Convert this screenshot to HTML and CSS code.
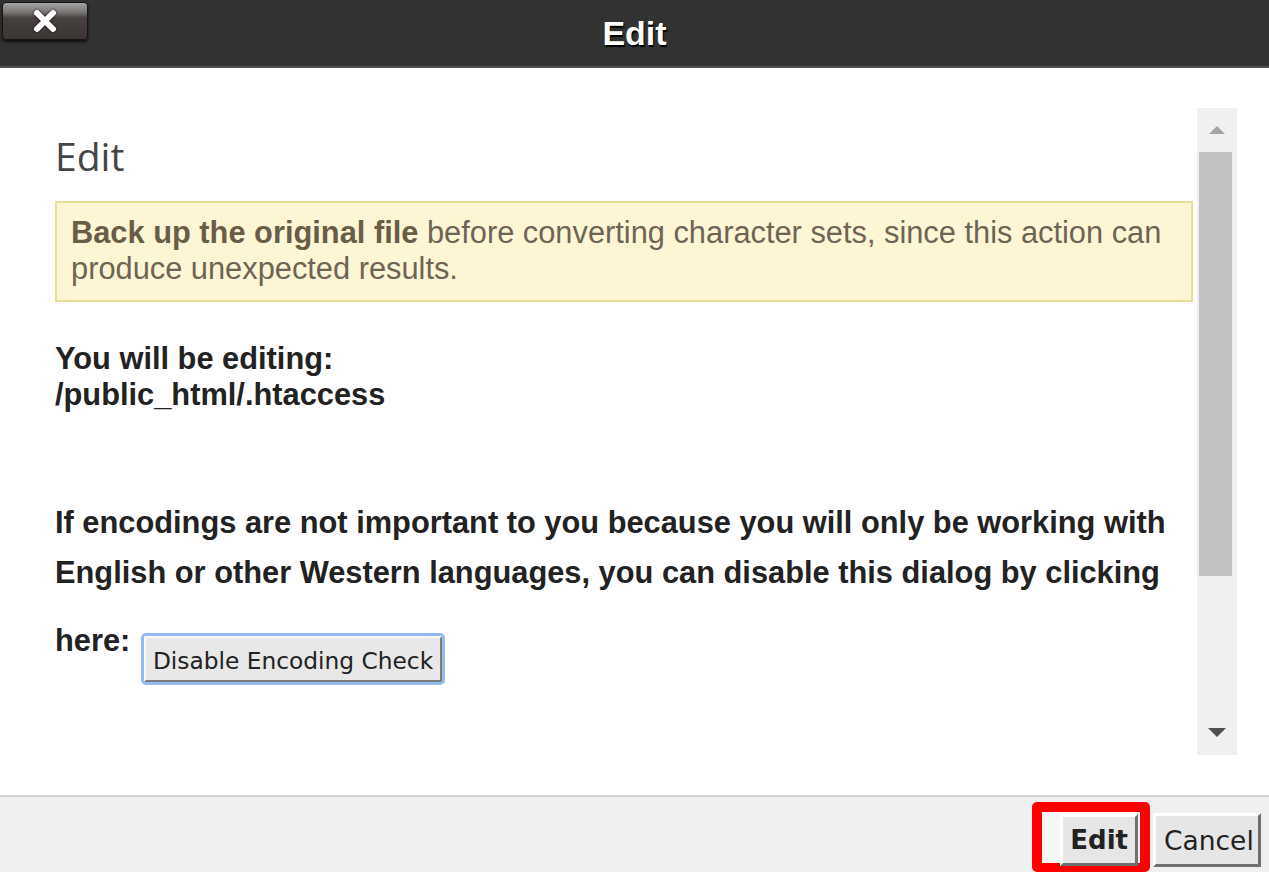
FILE: index.html
```html
<!DOCTYPE html>
<html lang="en">
<head>
    <meta charset="UTF-8">
    <meta name="viewport" content="width=device-width, initial-scale=1.0">
    <title>Edit</title>
    <link rel="stylesheet" href="styles.css">
</head>
<body>
    <div class="dialog">
        <header class="dialog-header">
            <button class="close-btn" type="button" aria-label="Close">
                <svg width="26" height="26" viewBox="0 0 26 26">
                    <path d="M5 5 L21 21 M21 5 L5 21" stroke="#fff" stroke-width="6" stroke-linecap="round"/>
                </svg>
            </button>
            <h1 class="dialog-title">Edit</h1>
        </header>

        <main class="dialog-body">
            <div class="scroll-box">
                <div class="scroll-content">
                    <h2 class="section-title">Edit</h2>
                    <div class="alert-warning">
                        <strong>Back up the original file</strong> before converting character sets, since this action can produce unexpected results.
                    </div>
                    <p class="editing">You will be editing:<br>/public_html/.htaccess</p>
                    <p class="notice">
                        If encodings are not important to you because you will only be working with English or other Western languages, you can disable this dialog by clicking here:
                        <button class="btn-disable" type="button">Disable Encoding Check</button>
                    </p>
                </div>
                <div class="scrollbar">
                    <span class="arrow-up"></span>
                    <div class="thumb"></div>
                    <span class="arrow-down"></span>
                </div>
            </div>
        </main>

        <footer class="dialog-footer">
            <span class="highlight">
                <button class="btn btn-edit" type="button">Edit</button>
            </span>
            <button class="btn btn-cancel" type="button">Cancel</button>
        </footer>
    </div>
</body>
</html>
```

FILE: styles.css
```css
body, html {
    margin: 0;
    padding: 0;
    height: 100%;
    font-family: 'Liberation Sans', Arial, sans-serif;
    background: #fff;
}
.dialog {
    display: flex;
    flex-direction: column;
    height: 100%;
    overflow: hidden;
}
.dialog-header {
    position: relative;
    height: 66px;
    flex-shrink: 0;
    background-color: #323232;
    border-bottom: 2px solid #4e4e4e;
    display: flex;
    justify-content: center;
    align-items: center;
}
.close-btn {
    position: absolute;
    left: 2px;
    top: 2px;
    width: 86px;
    height: 38px;
    padding: 0;
    border: 1px solid #161616;
    border-radius: 4px;
    background: linear-gradient(to bottom, #a5a5a5 0%, #7a7674 25%, #46413e 42%, #3b3633 100%);
    box-shadow: 0 2px 3px rgba(0,0,0,0.7);
    display: flex;
    justify-content: center;
    align-items: center;
}
.close-btn svg {
    filter: drop-shadow(0 0 1px #000);
}
.dialog-title {
    margin: 0;
    color: #fff;
    font-size: 34px;
    font-weight: bold;
    text-shadow: 1px 2px 1px #000;
}
.dialog-body {
    flex-grow: 1;
    padding: 40px 32px 40px 0;
    box-sizing: border-box;
    min-height: 0;
}
.scroll-box {
    display: flex;
    height: 100%;
}
.scroll-content {
    flex-grow: 1;
    padding: 21px 4px 0 55px;
    overflow: hidden;
    color: #222;
}
.section-title {
    margin: 0 0 19px;
    font-family: 'Open Sans', sans-serif;
    font-weight: 400;
    font-size: 39px;
    color: #444;
}
.alert-warning {
    background-color: #fdf6d4;
    border: 2px solid #e9df96;
    padding: 12px 14px 13px;
    font-size: 30.8px;
    line-height: 36px;
    color: #6e6456;
}
.alert-warning strong {
    color: #6a5d48;
}
.editing {
    margin: 39px 0 0;
    font-size: 30.8px;
    font-weight: bold;
    line-height: 36px;
}
.notice {
    margin: 85px 0 0;
    font-size: 30.8px;
    font-weight: bold;
    line-height: 50px;
    padding-right: 20px;
}
.btn-disable {
    display: inline-block;
    vertical-align: -18px;
    margin: 38px 0 0 5px;
    padding: 9px 7px 6px;
    line-height: 27px;
    font-family: 'DejaVu Sans', sans-serif;
    font-size: 23.3px;
    color: #222;
    background: #e8e8e8;
    border: 2px solid;
    border-color: #fafafa #7a7a7a #7a7a7a #fafafa;
    box-shadow: 0 0 0 3px #92bcf0;
    border-radius: 2px;
}
.scrollbar {
    flex: 0 0 40px;
    background: #f0f0f0;
    display: flex;
    flex-direction: column;
    align-items: center;
}
.arrow-up {
    margin-top: 18px;
    border-left: 8px solid transparent;
    border-right: 8px solid transparent;
    border-bottom: 8px solid #a3a3a3;
}
.thumb {
    margin: 18px 3px 0 0;
    width: 33px;
    height: 424px;
    background: #c1c1c1;
}
.arrow-down {
    margin-top: auto;
    margin-bottom: 18px;
    border-left: 9px solid transparent;
    border-right: 9px solid transparent;
    border-top: 9px solid #505050;
}
.dialog-footer {
    height: 70px;
    flex-shrink: 0;
    background-color: #efefef;
    border-top: 2px solid #d2d2d2;
    display: flex;
    justify-content: flex-end;
    align-items: flex-start;
    padding: 5px 8px 0 0;
}
.highlight {
    display: flex;
    box-sizing: border-box;
    height: 70px;
    border: 10px solid #f00;
    border-bottom-width: 9px;
    border-radius: 5px;
    padding: 2px 2px 0 18px;
    background: #f6f6f6;
}
.btn {
    padding: 0 8px;
    font-family: 'DejaVu Sans', sans-serif;
    font-size: 26.5px;
    color: #222;
    background: #e6e6e6;
    border: 3px solid;
    border-color: #fff #6f6f6f #6f6f6f #fff;
}
.btn-edit {
    height: 52px;
    font-size: 26px;
    font-weight: bold;
    padding: 0 7px;
}
.btn-cancel {
    margin: 11px 0 0 3px;
    height: 54px;
    width: 108px;
}
```
